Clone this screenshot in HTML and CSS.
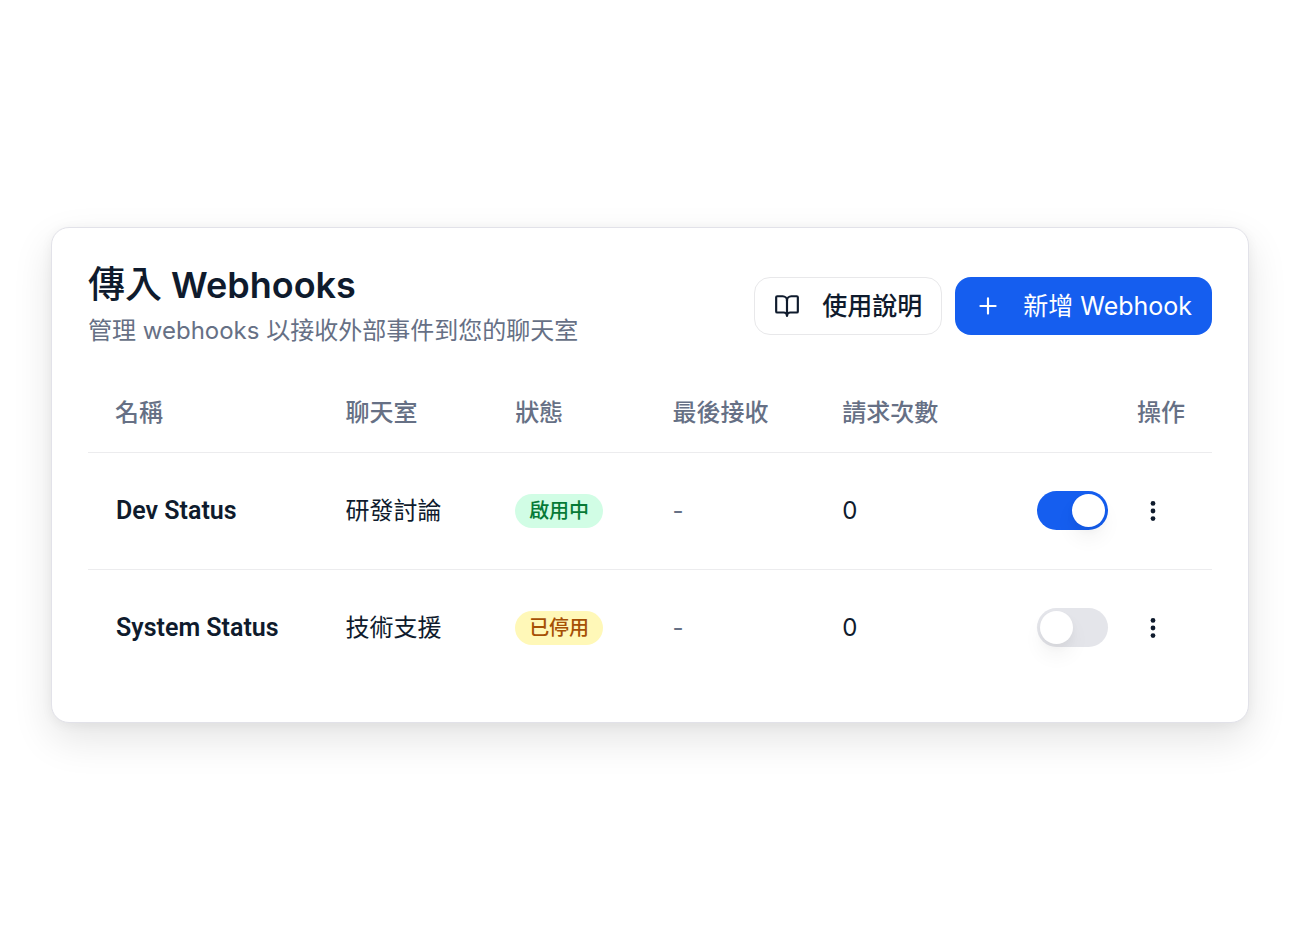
FILE: index.html
```html
<!DOCTYPE html>
<html lang="zh-Hant">
<head>
<meta charset="utf-8">
<meta name="viewport" content="width=device-width, initial-scale=1">
<title>傳入 Webhooks</title>
<link rel="stylesheet" href="styles.css">
</head>
<body class="page">
<main class="card">
  <header class="card-header">
    <div class="heading">
      <h1 class="title"><span class="title-lead">傳入</span> Webhooks</h1>
      <p class="subtitle">管理 webhooks 以接收外部事件到您的聊天室</p>
    </div>
    <div class="actions">
      <button class="button button-outline" type="button">
        <svg class="icon" viewBox="0 0 24 24" aria-hidden="true"><path d="M12 7v14"/><path d="M3 18a1 1 0 0 1-1-1V4a1 1 0 0 1 1-1h5a4 4 0 0 1 4 4 4 4 0 0 1 4-4h5a1 1 0 0 1 1 1v13a1 1 0 0 1-1 1h-6a3 3 0 0 0-3 3 3 3 0 0 0-3-3z"/></svg>
        <span>使用說明</span>
      </button>
      <button class="button button-primary" type="button">
        <svg class="icon" viewBox="0 0 24 24" aria-hidden="true"><path d="M5 12h14M12 5v14"/></svg>
        <span>新增 Webhook</span>
      </button>
    </div>
  </header>
  <table class="hooks">
    <colgroup>
      <col class="col-name"><col class="col-room"><col class="col-status"><col class="col-last"><col class="col-count"><col>
    </colgroup>
    <thead>
      <tr>
        <th scope="col">名稱</th>
        <th scope="col">聊天室</th>
        <th scope="col">狀態</th>
        <th scope="col">最後接收</th>
        <th scope="col">請求次數</th>
        <th scope="col" class="cell-end">操作</th>
      </tr>
    </thead>
    <tbody>
      <tr>
        <td class="name">Dev Status</td>
        <td>研發討論</td>
        <td><span class="badge badge-on">啟用中</span></td>
        <td class="muted">-</td>
        <td>0</td>
        <td>
          <div class="row-actions">
            <input class="switch" type="checkbox" role="switch" aria-label="Dev Status" checked>
            <button class="menu" type="button" aria-label="Dev Status 操作"><svg class="icon icon-dots" viewBox="0 0 24 24" aria-hidden="true"><circle cx="12" cy="5" r="2.200"/><circle cx="12" cy="12" r="2.200"/><circle cx="12" cy="19" r="2.200"/></svg></button>
          </div>
        </td>
      </tr>
      <tr>
        <td class="name">System Status</td>
        <td>技術支援</td>
        <td><span class="badge badge-off">已停用</span></td>
        <td class="muted">-</td>
        <td>0</td>
        <td>
          <div class="row-actions">
            <input class="switch" type="checkbox" role="switch" aria-label="System Status">
            <button class="menu" type="button" aria-label="System Status 操作"><svg class="icon icon-dots" viewBox="0 0 24 24" aria-hidden="true"><circle cx="12" cy="5" r="2.200"/><circle cx="12" cy="12" r="2.200"/><circle cx="12" cy="19" r="2.200"/></svg></button>
          </div>
        </td>
      </tr>
    </tbody>
  </table>
</main>
</body>
</html>
```
FILE: styles.css
```css
*, *::before {
  box-sizing: border-box;
}

.page {
  margin: 0;
  padding: 24px 51px;
  min-height: 100vh;
  display: flex;
  align-items: center;
  background: #fff;
  color: #0f1b2d;
  font-family: Inter, "Noto Sans CJK TC", sans-serif;
  font-size: 24px;
  line-height: 34px;
}

.card {
  flex: 1;
  padding: 36px;
  border: 1px solid #e2e2e9;
  border-radius: 18px;
  background: #fff;
  box-shadow: 0 16px 40px rgba(0, 0, 0, 0.11), 0 2px 12px rgba(0, 0, 0, 0.05);
}

.card-header {
  display: flex;
  justify-content: space-between;
  align-items: center;
  gap: 24px;
  margin-bottom: 26px;
}

.heading {
  display: grid;
  gap: 8px;
}

.title {
  margin: 0;
  font-size: 36px;
  font-weight: 600;
  line-height: 42px;
}

.title-lead {
  font-size: 37px;
  font-weight: 500;
}

.subtitle {
  margin: 0;
  color: #667085;
}

.actions {
  display: flex;
  gap: 13px;
}

.button {
  display: flex;
  align-items: center;
  gap: 22px;
  height: 58px;
  padding: 0 19px;
  border: 1px solid transparent;
  border-radius: 16px;
  font: inherit;
  font-size: 25px;
  font-weight: 500;
  white-space: nowrap;
  cursor: pointer;
}

.button-outline {
  background: #fff;
  border-color: #e8e8ea;
  color: #0f1b2d;
}

.button-primary {
  background: #155eef;
  color: #fff;
  font-weight: 400;
}

.icon {
  width: 26px;
  height: 26px;
  fill: none;
  stroke: currentColor;
  stroke-width: 2;
  stroke-linecap: round;
  stroke-linejoin: round;
}

.icon-dots {
  fill: currentColor;
  stroke: none;
}

.hooks {
  width: 100%;
  table-layout: fixed;
  border-collapse: collapse;
}

.col-name { width: 20.5%; }
.col-room { width: 15.1%; }
.col-status { width: 14%; }
.col-last { width: 15.1%; }
.col-count { width: 15.1%; }

.hooks th,
.hooks td {
  padding: 0 27px;
  text-align: left;
  white-space: nowrap;
}

.hooks th {
  height: 78px;
  color: #667085;
  font-weight: 500;
}

.hooks td {
  height: 117px;
}

.hooks tr {
  border-bottom: 1px solid #ececee;
}

.hooks tbody tr:last-child {
  border-bottom: 0;
}

.hooks .cell-end {
  text-align: right;
}

.hooks .name {
  padding-left: 28px;
  font-family: Roboto, sans-serif;
  font-size: 25px;
  font-weight: 600;
}

.hooks .muted {
  color: #667085;
}

.badge {
  display: inline-block;
  padding: 0 14px;
  border-radius: 17px;
  font-size: 20px;
  font-weight: 500;
  vertical-align: middle;
}

.badge-on {
  background: #d1fde5;
  color: #067a36;
}

.badge-off {
  background: #fff8b8;
  color: #a65005;
}

.row-actions {
  display: flex;
  justify-content: flex-end;
  align-items: center;
  gap: 13px;
}

.switch {
  appearance: none;
  display: flex;
  align-items: center;
  width: 71px;
  height: 39px;
  margin: 0;
  padding: 0 3px;
  border-radius: 20px;
  background: #e4e5ea;
  cursor: pointer;
}

.switch::before {
  content: "";
  width: 33px;
  height: 33px;
  border-radius: 50%;
  background: #fff;
  box-shadow: 0 12px 20px rgba(0, 0, 0, 0.05), 0 4px 8px rgba(0, 0, 0, 0.03);
}

.switch:checked {
  justify-content: flex-end;
  background: #155eef;
}

.menu {
  display: grid;
  place-items: center;
  width: 64px;
  height: 58px;
  padding: 0;
  border: 0;
  background: none;
  color: #0f1b2d;
  cursor: pointer;
}
```
